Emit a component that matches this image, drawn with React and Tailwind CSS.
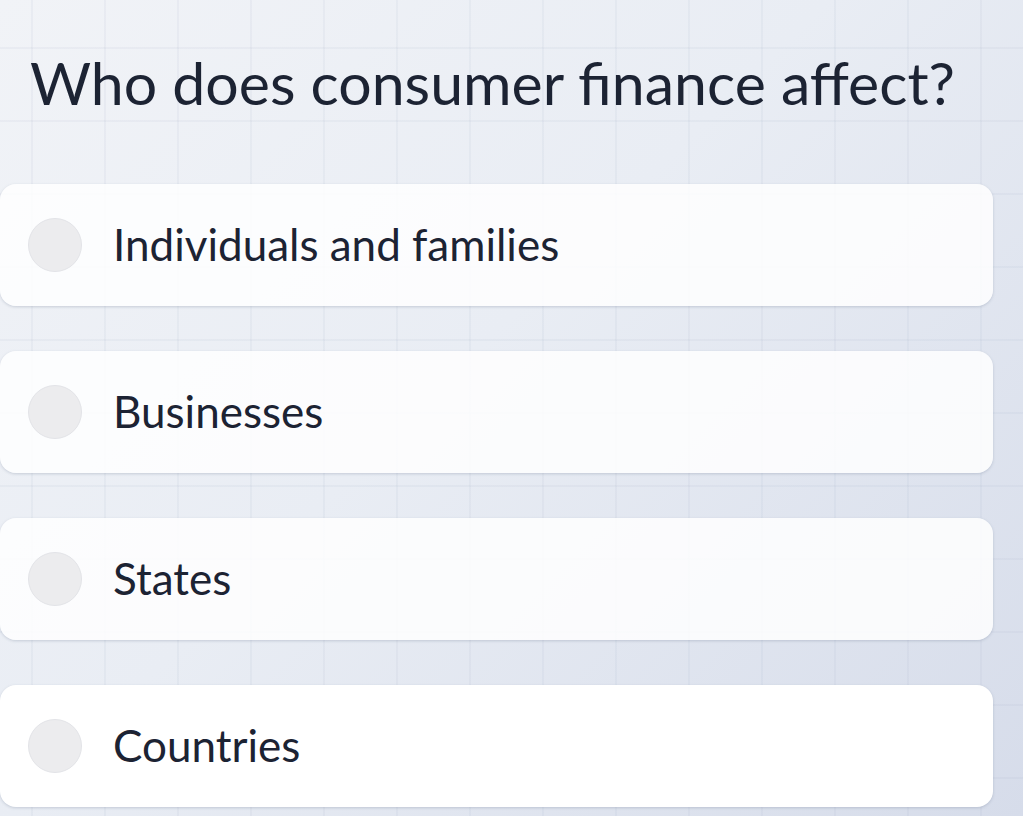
import React from "react";

const options = [
    "Individuals and families",
    "Businesses",
    "States",
    "Countries",
];

const Option = ({ label, active }) => {
    return (
        <div
            className={`flex items-center h-[122px] rounded-[16px] shadow-[0_1px_3px_rgba(100,116,139,0.28)] ${
                active ? "bg-white" : "bg-white/85"
            }`}
        >
            <span className="ml-[28px] w-[54px] h-[54px] rounded-full bg-[#ececee] border border-[#e3e4e8] shrink-0" />
            <span className="ml-[31px] text-[44px] leading-none text-[#1c2333] pb-[2px]">
                {label}
            </span>
        </div>
    );
};

const App = () => {
    return (
        <div className="min-h-screen w-full bg-[linear-gradient(135deg,#f1f3f7_0%,#e9edf4_45%,#d6dcea_100%)] font-['Lato',sans-serif]">
            <div className="min-h-screen w-full bg-[linear-gradient(to_right,rgba(160,172,196,0.1)_2px,transparent_2px),linear-gradient(to_bottom,rgba(160,172,196,0.1)_2px,transparent_2px)] bg-[size:73px_73px] bg-[position:31px_47px]">
                <h1 className="pl-[30px] pt-[53px] text-[59px] leading-none text-[#1c2333]">
                    Who does consumer finance affect?
                </h1>

                <div className="mt-[72px] pr-[30px] flex flex-col gap-[45px]">
                    {options.map((label, i) => (
                        <Option
                            key={label}
                            label={label}
                            active={i === options.length - 1}
                        />
                    ))}
                </div>
            </div>
        </div>
    );
};

export default App;
